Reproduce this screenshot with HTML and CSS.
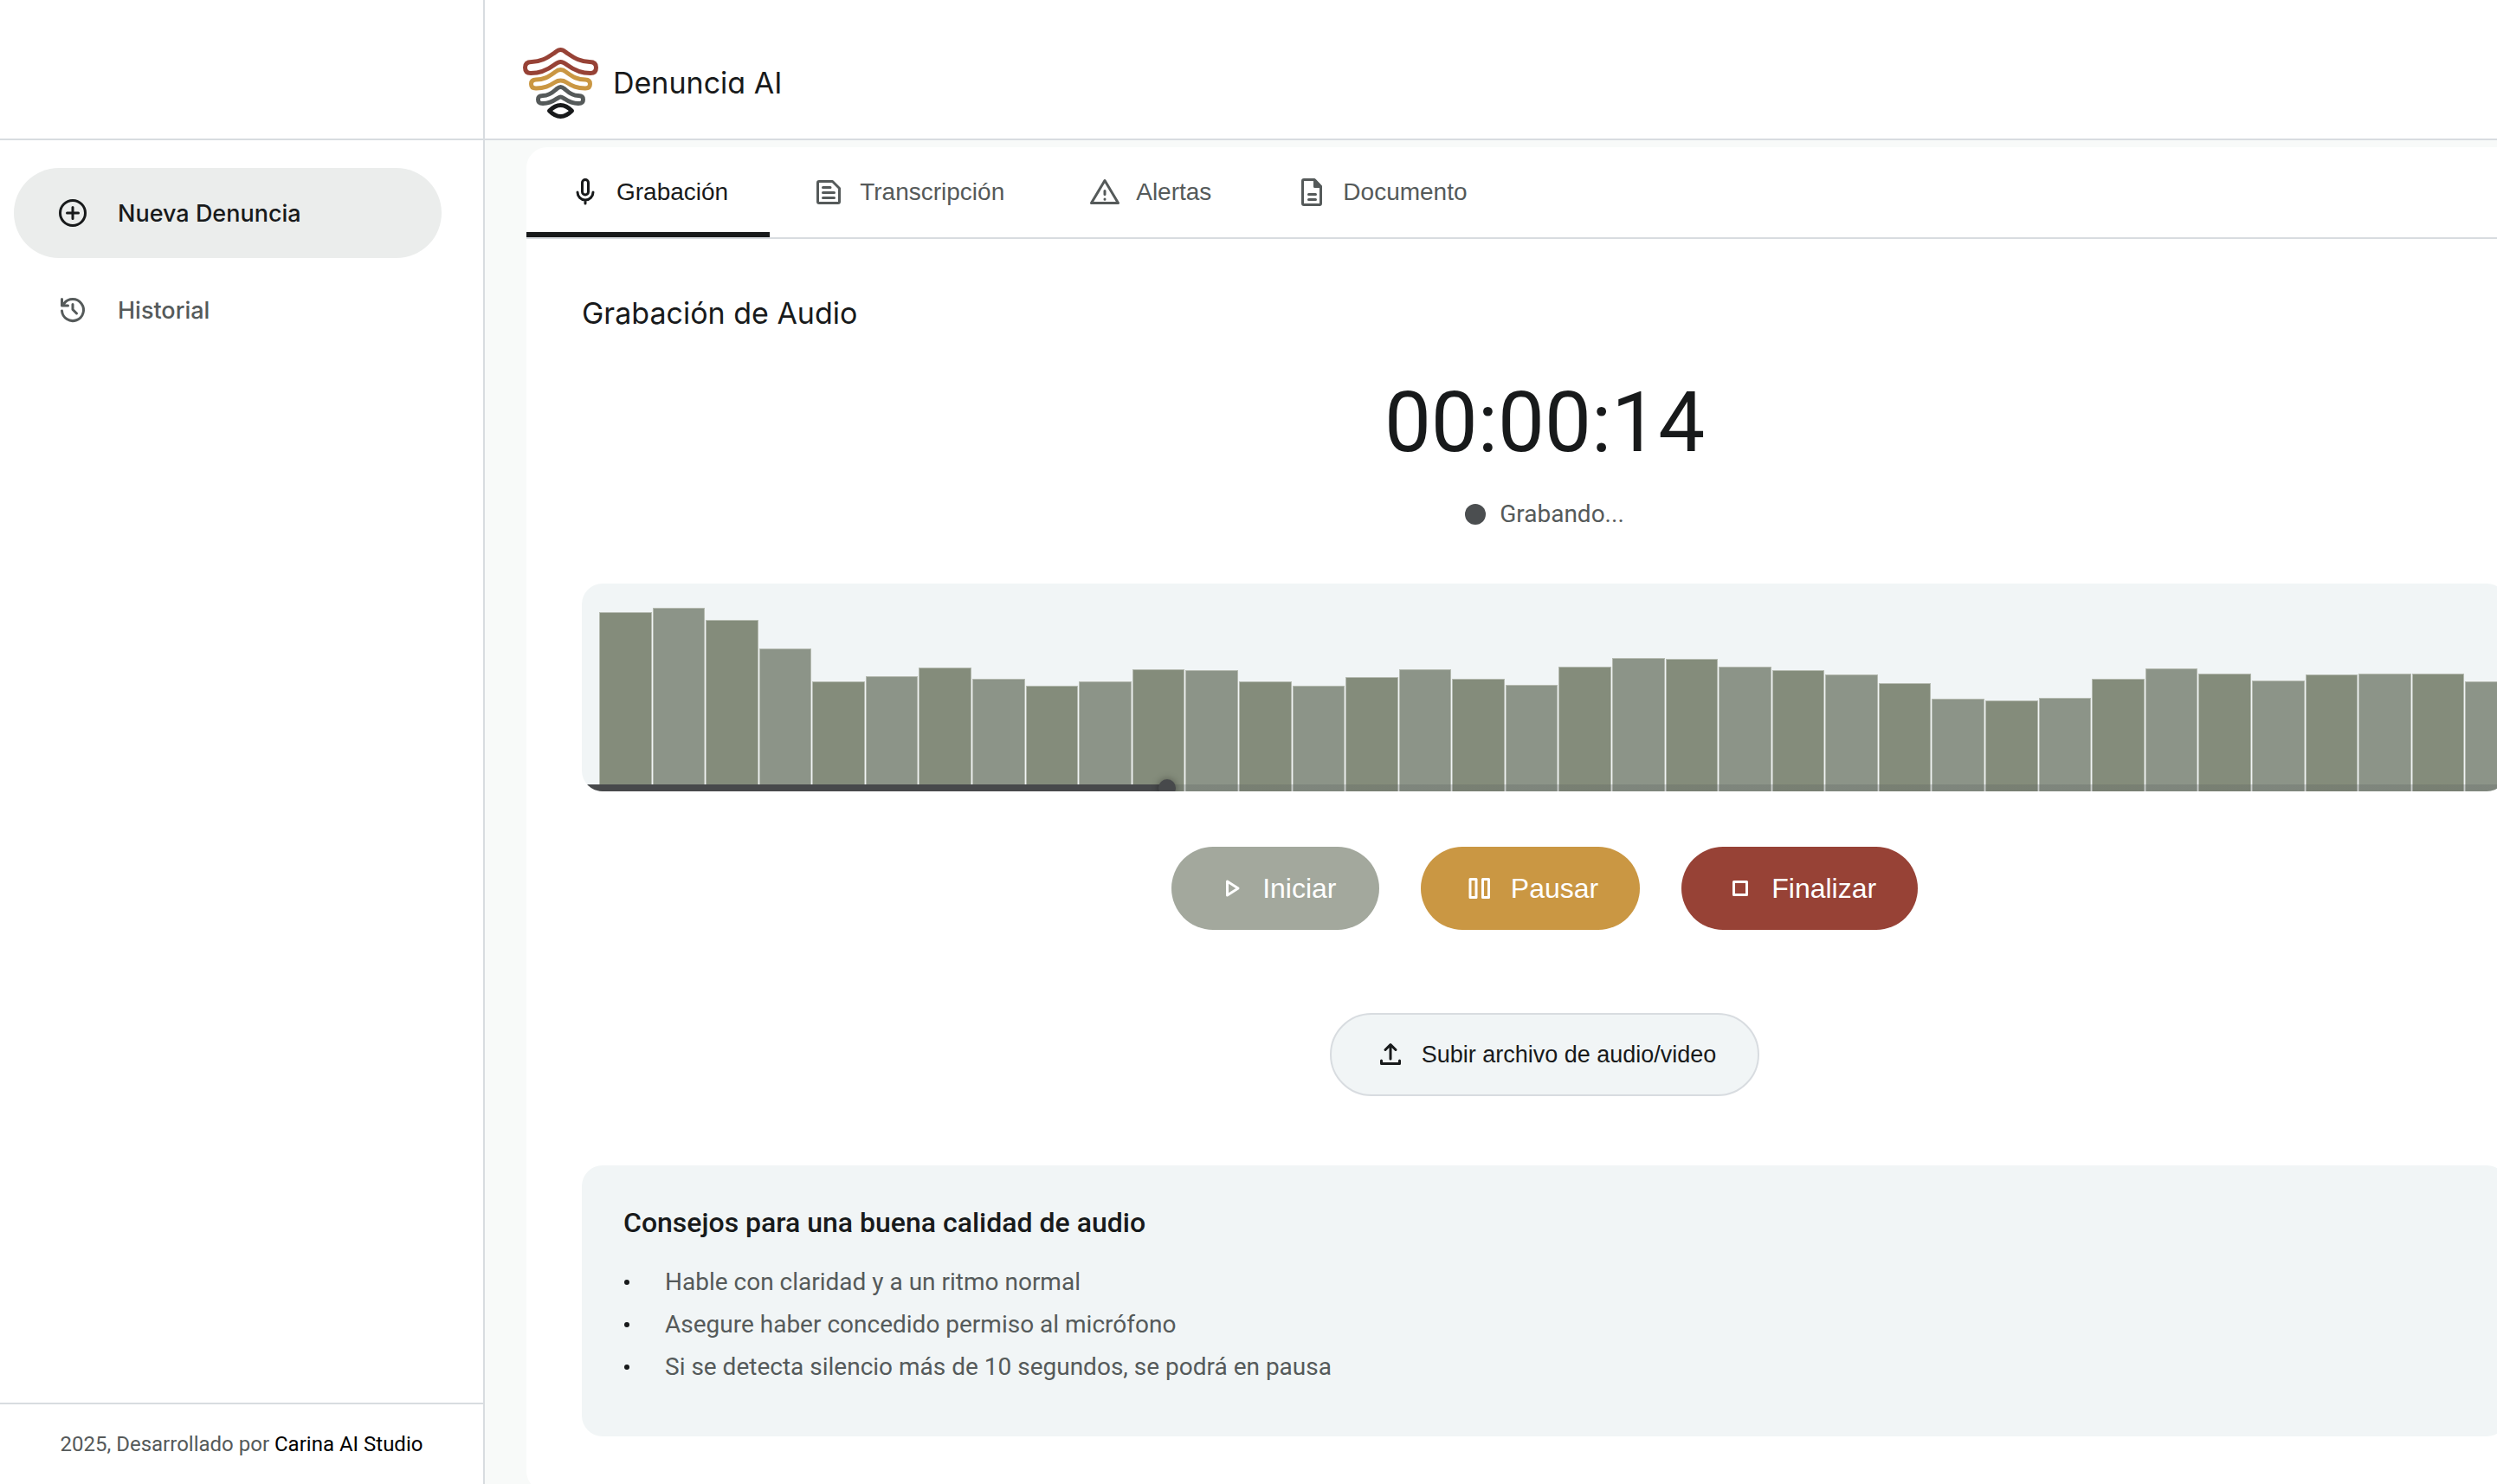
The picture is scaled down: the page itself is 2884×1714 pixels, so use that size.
FILE: index.html
```html
<!DOCTYPE html>
<html lang="es">
<head>
<meta charset="utf-8">
<title>Denuncia AI</title>
<link rel="stylesheet" href="styles.css">
</head>
<body>
<div class="app">
  <aside class="sidebar">
    <div class="sidebar-top"></div>
    <nav class="nav" aria-label="Principal">
      <a class="nav-item nav-item-active" href="#nueva">
        <svg class="icon" viewBox="0 0 40 40"><circle cx="20" cy="20" r="14.5"/><path d="M20 13.500v13M13.500 20h13"/></svg>
        Nueva Denuncia
      </a>
      <a class="nav-item" href="#historial">
        <svg class="icon" viewBox="0 0 40 40"><path d="M7.500 21A12.500 12.500 0 1 0 10 12.500L8 15M7.500 7.500V15H14.500M20 13.500v6l4.500 4.500"/></svg>
        Historial
      </a>
    </nav>
    <footer class="credits">2025, Desarrollado por&nbsp;<a href="#carina">Carina AI Studio</a></footer>
  </aside>

  <div class="page">
    <header class="header">
      <svg class="logo" viewBox="0 0 88 84">
        <path class="logo-red" d="M43.500 3.500C40 3.500 38 6 35 8C27 13.500 20 17.500 10 17.500C5 17.500 2.500 20 2.500 24C2.500 28.500 5 30.500 9 30.500C20 30.500 28 27 36 21C40 18 41.500 17.500 43.500 17.500C45.500 17.500 47 18 51 21C59 27 67 30.500 78 30.500C82 30.500 84.500 28.500 84.500 24C84.500 20 82 17.500 77 17.500C67 17.500 60 13.500 52 8C49 6 47 3.500 43.500 3.500Z"/>
        <path class="logo-gold" d="M43.500 26.500C40 26.500 38 28.500 36 30C29 35 24 38 15 38C11 38 9.500 40 9.500 43C9.500 46 11 48 15 48C25 48 30 45.500 37 41C40 39 41.500 39 43.500 39C45.500 39 47 39 50 41C57 45.500 62 48 72 48C76 48 77.500 46 77.500 43C77.500 40 76 38 72 38C63 38 58 35 51 30C49 28.500 47 26.500 43.500 26.500Z"/>
        <path class="logo-gray" d="M43.500 46.500C41 46.500 40 48 38 49.500C33 54 29 56.500 23 56.500C19 56.500 17.500 58 17.500 61C17.500 64 19 65.500 23 65.500C30 65.500 34 63.500 39 60C41.500 58.500 42 58 43.500 58C45 58 45.500 58.500 48 60C53 63.500 57 65.500 64 65.500C68 65.500 69.500 64 69.500 61C69.500 58 68 56.500 64 56.500C58 56.500 54 54 49 49.500C47 48 46 46.500 43.500 46.500Z"/>
        <path class="logo-black" d="M30.500 74C35 69.500 39 67.500 43.500 67.500C48 67.500 52 69.500 56.500 74C52 78.500 48 80.500 43.500 80.500C39 80.500 35 78.500 30.500 74Z"/>
      </svg>
      <span class="brand">Denuncia AI</span>
    </header>

    <main class="card">
      <div class="tabs" role="tablist">
        <button class="tab tab-active" role="tab" aria-selected="true">
          <svg class="icon" viewBox="0 0 40 40"><path d="M20 5.500a3.500 3.500 0 0 1 3.500 3.500v10.500a3.500 3.500 0 0 1-7 0V9a3.500 3.500 0 0 1 3.500-3.500zM11 20a9 9 0 0 0 18 0M20 29.500v3.500"/></svg>
          Grabación
        </button>
        <button class="tab" role="tab">
          <svg class="icon" viewBox="0 0 40 40"><path d="M9 7.500h15.500l8 8V31a1.500 1.500 0 0 1-1.500 1.500H9A1.500 1.500 0 0 1 7.500 31V9A1.500 1.500 0 0 1 9 7.500zM13.500 14.500h8.500M13.500 20.500h13M13.500 26.500h13"/></svg>
          Transcripción
        </button>
        <button class="tab" role="tab">
          <svg class="icon" viewBox="0 0 40 40"><path d="M20 6.500L35.500 32.500H4.500z"/><path d="M20 18.500v4M20 28v0.200"/></svg>
          Alertas
        </button>
        <button class="tab" role="tab">
          <svg class="icon" viewBox="0 0 40 40"><path d="M11 5.500h12l7.500 8V33a1.500 1.500 0 0 1-1.500 1.500H11A1.500 1.500 0 0 1 9.500 33V7A1.500 1.500 0 0 1 11 5.500zM16.500 22.500h8M16.500 28.500h8"/><path fill="currentColor" d="M23.500 6v7.500h7z"/></svg>
          Documento
        </button>
      </div>

      <section class="panel">
        <h1 class="title">Grabación de Audio</h1>
        <div class="timer" role="timer">00:00:14</div>
        <p class="status"><span class="status-dot"></span>Grabando...</p>

        <div class="waveform">
          <div class="bars">
            <i style="height:207px"></i><i style="height:212px"></i><i style="height:198px"></i><i style="height:165px"></i><i style="height:127px"></i><i style="height:133px"></i><i style="height:143px"></i><i style="height:130px"></i><i style="height:122px"></i><i style="height:127px"></i><i style="height:141px"></i><i style="height:140px"></i><i style="height:127px"></i><i style="height:122px"></i><i style="height:132px"></i><i style="height:141px"></i><i style="height:130px"></i><i style="height:123px"></i><i style="height:144px"></i><i style="height:154px"></i><i style="height:153px"></i><i style="height:144px"></i><i style="height:140px"></i><i style="height:135px"></i><i style="height:125px"></i><i style="height:107px"></i><i style="height:105px"></i><i style="height:108px"></i><i style="height:130px"></i><i style="height:142px"></i><i style="height:136px"></i><i style="height:128px"></i><i style="height:135px"></i><i style="height:136px"></i><i style="height:136px"></i><i style="height:127px"></i>
          </div>
          <input class="seek" type="range" min="0" max="1000" value="302" aria-label="Posición de la grabación">
        </div>

        <div class="actions">
          <button class="button button-start" disabled>
            <svg class="icon" viewBox="0 0 40 40"><path d="M15.500 12v16L28 20z"/></svg>
            Iniciar
          </button>
          <button class="button button-pause">
            <svg class="icon" viewBox="0 0 40 40"><path d="M9 9.500h7v21H9zM23.500 9.500h7v21h-7z"/></svg>
            Pausar
          </button>
          <button class="button button-stop">
            <svg class="icon" viewBox="0 0 40 40"><path d="M12.500 12.500h15v15h-15z"/></svg>
            Finalizar
          </button>
        </div>

        <button class="button button-upload">
          <svg class="icon" viewBox="0 0 40 40"><path d="M20 25V9M14 14.500L20 8.500l6 6M9.500 27v3.500h21V27"/></svg>
          Subir archivo de audio/video
        </button>

        <section class="tips">
          <h2 class="tips-title">Consejos para una buena calidad de audio</h2>
          <ul class="tips-list">
            <li>Hable con claridad y a un ritmo normal</li>
            <li>Asegure haber concedido permiso al micrófono</li>
            <li>Si se detecta silencio más de 10 segundos, se podrá en pausa</li>
          </ul>
        </section>
      </section>
    </main>
  </div>
</div>
</body>
</html>
```
FILE: styles.css
```css
:root {
  --ink: #181a1b;
  --muted: #555a5a;
  --line: #d8dce0;
  --surface: #f1f5f6;
}

* {
  box-sizing: border-box;
}

body {
  margin: 0;
  color: var(--ink);
  background: #fff;
  font-family: Roboto, sans-serif;
  font-size: 28px;
}

a {
  color: inherit;
  text-decoration: none;
}

button {
  margin: 0;
  border: 0;
  background: none;
  color: inherit;
  font-family: "Liberation Sans", Arial, sans-serif;
}

.icon {
  flex: none;
  width: 40px;
  height: 40px;
  fill: none;
  stroke: currentColor;
  stroke-width: 3;
  stroke-linecap: round;
  stroke-linejoin: round;
}

.app {
  display: flex;
  height: 100vh;
  overflow: hidden;
}

/* Sidebar */
.sidebar {
  flex: none;
  display: flex;
  flex-direction: column;
  width: 560px;
  border-right: 2px solid var(--line);
}

.sidebar-top {
  height: 162px;
  border-bottom: 2px solid var(--line);
}

.nav {
  flex: 1;
  display: flex;
  flex-direction: column;
  gap: 8px;
  padding: 32px 48px 32px 16px;
}

.nav-item {
  display: flex;
  align-items: center;
  gap: 32px;
  height: 104px;
  padding: 0 48px;
  border-radius: 52px;
  color: var(--muted);
  font-family: Inter, sans-serif;
  font-size: 27px;
  font-weight: 500;
}

.nav-item-active {
  background: #ebedec;
  color: var(--ink);
}

.credits {
  display: flex;
  align-items: center;
  justify-content: center;
  height: 94px;
  border-top: 2px solid var(--line);
  color: var(--muted);
  font-size: 24px;
}

.credits a {
  color: #000;
}

/* Page */
.page {
  flex: 1;
  min-width: 0;
  background: #f8faf9;
}

.header {
  display: flex;
  align-items: center;
  gap: 16px;
  height: 162px;
  padding: 32px 44px 0;
  border-bottom: 2px solid var(--line);
  background: #fff;
}

.logo {
  width: 88px;
  height: 84px;
  fill: none;
  stroke-width: 5;
  stroke-linejoin: round;
}

.logo-red { stroke: #974236; }
.logo-gold { stroke: #ca9743; }
.logo-gray { stroke: #555a5a; }
.logo-black { stroke: #181a1b; }

.brand {
  font-family: Inter, sans-serif;
  font-feature-settings: "cv11" 1;
  font-size: 34px;
  line-height: 48px;
}

/* The card runs past the right edge of the viewport */
.card {
  margin: 8px -76px 0 48px;
  border-radius: 24px;
  background: #fff;
}

.tabs {
  display: flex;
  height: 106px;
  border-bottom: 2px solid var(--line);
}

.tab {
  display: flex;
  align-items: center;
  gap: 16px;
  padding: 6px 48px 0;
  border-bottom: 6px solid transparent;
  color: var(--muted);
  font-size: 28px;
}

.tab-active {
  border-bottom-color: var(--ink);
  color: var(--ink);
}

.panel {
  display: flex;
  flex-direction: column;
  padding: 62px 64px 64px;
}

.title {
  margin: 0;
  font-family: Inter, sans-serif;
  font-size: 34px;
  font-weight: 400;
  line-height: 48px;
}

.timer {
  margin-top: 46px;
  font-size: 96px;
  line-height: 112px;
  text-align: center;
}

.status {
  display: flex;
  align-items: center;
  justify-content: center;
  gap: 16px;
  margin: 30px 0 60px;
  color: var(--muted);
  line-height: 40px;
}

.status-dot {
  width: 24px;
  height: 24px;
  border-radius: 50%;
  background: #4b4e50;
}

.waveform {
  position: relative;
  height: 240px;
  padding-left: 20px;
  border-radius: 24px;
  background: var(--surface);
  overflow: hidden;
}

.bars {
  display: flex;
  align-items: flex-end;
  gap: 1px;
  height: 100%;
  margin-right: -12px;
}

.bars i {
  flex: 1;
  border: 1px solid #b5bab0;
  border-bottom: 0;
  background: #8c9488;
}

.bars i:nth-child(odd) {
  background: #848c7b;
}

.seek {
  position: absolute;
  left: 0;
  bottom: -6px;
  width: 100%;
  height: 20px;
  margin: 0;
  background: none;
  appearance: none;
}

.seek::-webkit-slider-runnable-track {
  height: 8px;
  background: linear-gradient(to right, #47494b 30%, rgba(85, 90, 90, 0.25) 30%);
}

.seek::-webkit-slider-thumb {
  width: 20px;
  height: 20px;
  margin-top: -6px;
  border-radius: 50%;
  background: #47494b;
  box-shadow: 0 0 8px rgba(0, 0, 0, 0.4);
  appearance: none;
}

.actions {
  display: flex;
  justify-content: center;
  gap: 48px;
  margin-top: 64px;
}

.button {
  display: flex;
  align-items: center;
  justify-content: center;
  gap: 16px;
  min-width: 240px;
  height: 96px;
  padding: 0 48px;
  border-radius: 48px;
  color: #fff;
  font-size: 32px;
}

.button-start { background: #a3a89d; }
.button-pause { background: #ca9743; }
.button-stop { background: #974236; }

.button-upload {
  align-self: center;
  margin-top: 96px;
  border: 2px solid var(--line);
  background: var(--surface);
  color: var(--ink);
  font-size: 27px;
}

.tips {
  margin-top: 80px;
  padding: 46px 48px 56px;
  border-radius: 24px;
  background: var(--surface);
}

.tips-title {
  margin: 0 0 24px;
  font-size: 32px;
  font-weight: 500;
  line-height: 40px;
}

.tips-list {
  margin: 0;
  padding: 0;
  list-style: none;
  color: var(--muted);
  line-height: 49px;
}

.tips-list li {
  display: flex;
  align-items: center;
  gap: 40px;
}

.tips-list li::before {
  content: "";
  width: 6px;
  height: 6px;
  margin: 0 1px;
  border-radius: 50%;
  background: var(--ink);
}
```
